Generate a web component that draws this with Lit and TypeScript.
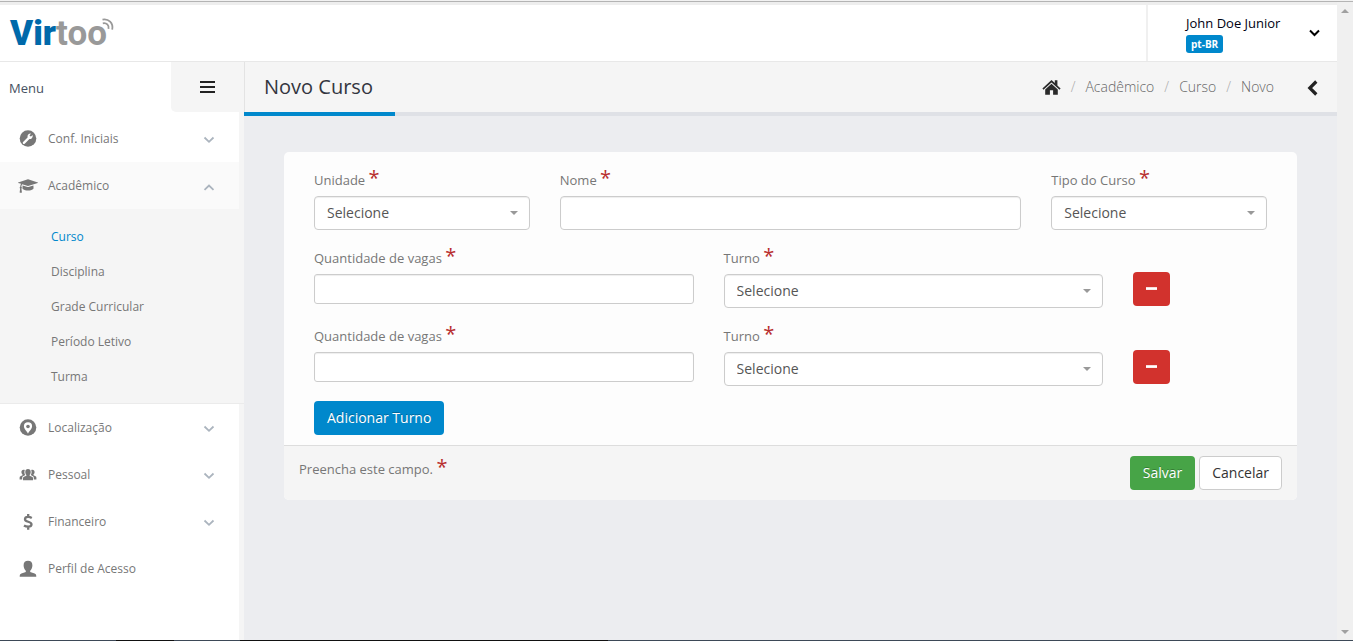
import { LitElement, html, css, svg, nothing } from "lit";
import { customElement, property, state } from "lit/decorators.js";
import { classMap } from "lit/directives/class-map.js";

const icons = {
  wrench: svg`<svg class="icon" width="18" height="18" viewBox="0 0 18 18"><circle cx="9" cy="8.500" r="8.300" fill="currentColor"/><path d="M4.900 12.900 10.600 7.100" stroke="#fff" stroke-width="2.300" stroke-linecap="round"/><path d="M13.600 5 11.700 6.700 10.500 5.700 11.900 3.400A3.200 3.200 0 0 0 8.600 7.400L10.300 9.100A3.200 3.200 0 0 0 13.600 5Z" fill="#fff"/></svg>`,
  cap: svg`<svg class="icon" width="20" height="16" viewBox="0 0 2304 1792"><path fill="currentColor" d="M1774 836l18 316q4 69-82 128t-235 93.500-323 34.500-323-34.500-235-93.500-82-128l18-316 574 181q22 7 48 7t48-7zM2304 512q0 23-22 31l-1120 352q-4 1-10 1t-10-1l-652-206q-43 34-71 111.500t-34 178.500q63 36 63 109 0 69-58 107l58 433q2 14-8 25-9 11-24 11h-192q-15 0-24-11-10-11-8-25l58-433q-58-38-58-107 0-73 65-111 11-207 98-330l-333-104q-22-8-22-31t22-31l1120-352q4-1 10-1t10 1l1120 352q22 8 22 31z"/></svg>`,
  pin: svg`<svg class="icon" width="18" height="18" viewBox="0 0 18 18"><circle cx="9" cy="8.500" r="8.300" fill="currentColor"/><path d="M9 14.800C8.200 12.400 4.900 10.300 4.900 7.300A4.100 4.100 0 0 1 13.100 7.300C13.100 10.300 9.800 12.400 9 14.800Z" fill="#fff"/><circle cx="9" cy="7.500" r="1.800" fill="currentColor"/></svg>`,
  group: svg`<svg class="icon" width="18" height="18" viewBox="0 0 18 18" fill="currentColor"><path d="M6.300 6C6.300 3.700 7.300 3 9 3S11.700 3.700 11.700 6C11.700 7.500 11.200 8.300 10.600 8.900V9.700L13 10.700C13.700 11 14 11.500 14 12.300V14.300H4V12.300C4 11.500 4.300 11 5 10.700L7.400 9.700V8.900C6.800 8.300 6.300 7.500 6.300 6Z"/><path d="M5.800 3.900C3.600 3.200 2.400 4.300 2.400 6 2.400 7.300 2.900 8 3.500 8.600V9.200L1.500 10.200C.9 10.500.6 11 .6 11.700V13.500H3.200V12C3.200 10.900 3.600 10.300 4.500 9.900L6.300 9C5.300 7.700 5.100 5.500 5.800 3.900ZM12.200 3.900C14.400 3.200 15.600 4.300 15.600 6 15.600 7.300 15.100 8 14.500 8.600V9.200L16.500 10.200C17.100 10.500 17.400 11 17.400 11.700V13.500H14.800V12C14.800 10.900 14.400 10.300 13.500 9.900L11.700 9C12.700 7.700 12.900 5.500 12.200 3.900Z"/></svg>`,
  dollar: svg`<svg class="icon" width="18" height="18" viewBox="0 0 18 18" fill="none" stroke="currentColor" stroke-width="2.300"><path d="M12.800 5C11.600 4.300 10.600 3.900 9.200 3.900 7.300 3.900 6 4.800 6 6.200 6 9.500 12.500 8 12.500 11.300 12.500 12.900 11.100 13.700 9.200 13.700 7.500 13.700 6.200 13.300 5 12.500M9.200 1V3.900M9.200 13.700V16.700"/></svg>`,
  user: svg`<svg class="icon" width="18" height="18" viewBox="0 0 18 18" fill="currentColor"><path d="M4.600 5.200C4.600 2.200 6.300.8 9 .8S13.400 2.200 13.400 5.200C13.400 7.800 12.400 9.500 11.200 10.700V12L15.600 13.400C16.900 13.900 17.300 14.600 17.300 16.800H.7C.7 14.600 1.100 13.900 2.400 13.400L6.800 12V10.700C5.600 9.500 4.600 7.800 4.600 5.200Z"/></svg>`,
};

const chevronDown = svg`<svg width="12" height="8" viewBox="0 0 12 8" fill="none" stroke="currentColor" stroke-width="1.800"><path d="M1.500 1.500 6 5.800 10.500 1.500"/></svg>`;
const chevronUp = svg`<svg width="12" height="8" viewBox="0 0 12 8" fill="none" stroke="currentColor" stroke-width="1.800"><path d="M1.500 6.800 6 2.500 10.500 6.800"/></svg>`;

interface MenuEntry {
  label: string;
  icon: keyof typeof icons;
  leaf?: boolean;
  children?: string[];
}

const MENU: MenuEntry[] = [
  { label: "Conf. Iniciais", icon: "wrench" },
  {
    label: "Acadêmico",
    icon: "cap",
    children: ["Curso", "Disciplina", "Grade Curricular", "Período Letivo", "Turma"],
  },
  { label: "Localização", icon: "pin" },
  { label: "Pessoal", icon: "group" },
  { label: "Financeiro", icon: "dollar" },
  { label: "Perfil de Acesso", icon: "user", leaf: true },
];

@customElement("side-menu")
class SideMenu extends LitElement {
  @state() open = "Acadêmico";

  static styles = css`
    :host {
      display: block;
      background: #fff;
      border-right: 5px solid #f5f5f5;
      padding-top: 3px;
      font-size: 12px;
      line-height: 17px;
    }
    ul {
      list-style: none;
      margin: 0;
      padding: 0;
    }
    .item {
      box-sizing: border-box;
      display: flex;
      align-items: center;
      width: 100%;
      height: 47px;
      padding: 0 24px 0 18px;
      border: 0;
      background: none;
      color: #777;
      font: inherit;
      text-align: left;
      text-decoration: none;
      cursor: pointer;
    }
    .open {
      background: #fafafa;
    }
    .glyph {
      display: flex;
      justify-content: center;
      width: 20px;
      margin-right: 10px;
    }
    .label {
      flex: 1;
    }
    .arrow {
      display: flex;
      padding-top: 3px;
      color: #abb4be;
    }
    .sub {
      margin-right: -5px;
      padding: 10px 0 9px;
      background: #f5f5f5;
      border-bottom: 1px solid #ebebeb;
    }
    .sub a {
      display: block;
      padding: 9px 20px 9px 51px;
      color: #777;
      text-decoration: none;
    }
    .sub .current {
      color: #0088cc;
    }
  `;

  toggle(label: string) {
    this.open = this.open === label ? "" : label;
  }

  renderEntry(e: MenuEntry) {
    const open = this.open === e.label;
    if (e.leaf) {
      return html`<li><a class="item" href="#"><span class="glyph">${icons[e.icon]}</span><span class="label">${e.label}</span></a></li>`;
    }
    return html`<li>
      <button class=${classMap({ item: true, open })} type="button" aria-expanded=${open} @click=${() => this.toggle(e.label)}>
        <span class="glyph">${icons[e.icon]}</span><span class="label">${e.label}</span>
        <span class="arrow">${open ? chevronUp : chevronDown}</span>
      </button>
      ${open && e.children
        ? html`<ul class="sub">${e.children.map((c, i) => html`<li><a class=${classMap({ current: i === 0 })} href="#">${c}</a></li>`)}</ul>`
        : nothing}
    </li>`;
  }

  render() {
    return html`<nav aria-label="Menu"><ul>${MENU.map((e) => this.renderEntry(e))}</ul></nav>`;
  }
}

@customElement("form-field")
class FormField extends LitElement {
  @property() label = "";
  @property() kind = "text";
  @property({ type: Boolean }) compact = false;

  static styles = css`
    :host {
      display: block;
      min-width: 0;
    }
    label {
      display: block;
      height: 34px;
      font-size: 13px;
      line-height: 36px;
      color: #777;
      white-space: nowrap;
    }
    .req {
      font-size: 20px;
      line-height: 1px;
      color: #b82e2e;
    }
    input,
    select {
      box-sizing: border-box;
      display: block;
      width: 100%;
      height: 34px;
      margin: 0;
      padding: 0 12px;
      border: 1px solid #ccc;
      border-radius: 4px;
      background: #fff;
      box-shadow: inset 0 1px 1px rgba(0, 0, 0, 0.07);
      color: #555;
      font: 14px/20px "Open Sans", sans-serif;
      appearance: none;
      grid-area: 1 / 1;
    }
    input.compact {
      height: 30px;
      border-radius: 3px;
    }
    .picker {
      display: grid;
      align-items: center;
    }
    .caret {
      grid-area: 1 / 1;
      justify-self: end;
      margin-right: 12px;
      pointer-events: none;
    }
  `;

  render() {
    const control =
      this.kind === "select"
        ? html`<div class="picker">
            <select id="control"><option>Selecione</option></select>
            <svg class="caret" width="8" height="4" viewBox="0 0 8 4"><path d="M0 0H8L4 4Z" fill="#999" /></svg>
          </div>`
        : html`<input id="control" type="text" class=${classMap({ compact: this.compact })} />`;
    return html`<label for="control">${this.label} <span class="req">*</span></label>${control}`;
  }
}

@customElement("app-root")
class AppRoot extends LitElement {
  @state() shifts = [1, 2];

  static styles = css`
    :host {
      box-sizing: border-box;
      display: flex;
      flex-direction: column;
      min-height: 100vh;
      background: #ecedf0;
      color: #777;
      font: 13px/20px "Open Sans", sans-serif;
    }
    .chrome {
      height: 1px;
      background: #f2f2f2;
      border-bottom: 1px solid #b4b4b4;
    }
    .frame {
      flex: 1;
      display: flex;
    }
    .app {
      flex: 1;
      min-width: 0;
      display: flex;
      flex-direction: column;
      border-top: 3px solid #eee;
    }
    .scroll {
      display: flex;
      flex-direction: column;
      justify-content: space-between;
      align-items: center;
      width: 16px;
      padding: 7px 0 6px;
      box-sizing: border-box;
      background: #f0f0f0;
    }
    .taskbar {
      height: 1px;
      background: linear-gradient(90deg, #3d4957 116px, #111 116px 174px, #3d4957 174px 240px, #111 240px 608px, #3d4957 608px);
    }
    .top {
      display: flex;
      justify-content: space-between;
      height: 56px;
      background: #fff;
      border-bottom: 1px solid #e8e8e8;
    }
    .logo {
      position: relative;
      padding-left: 10px;
      color: #999;
      font: 700 35px/58px Roboto, sans-serif;
      text-decoration: none;
    }
    .logo b {
      color: #0069aa;
    }
    .waves {
      position: absolute;
      left: 100px;
      top: 12px;
    }
    .account {
      box-sizing: border-box;
      display: flex;
      align-items: center;
      justify-content: space-between;
      width: 191px;
      padding: 0 17px 0 38px;
      border: 0;
      border-left: 2px solid #f0f0f0;
      background: none;
      color: #000011;
      font: inherit;
      text-align: left;
    }
    .who {
      display: flex;
      flex-direction: column;
      align-items: flex-start;
      gap: 2px;
    }
    .lang {
      padding: 0 5px;
      border-radius: 3px;
      background: #0088cc;
      color: #fff;
      font-size: 10px;
      font-weight: 700;
      line-height: 18px;
    }
    .body {
      flex: 1;
      display: grid;
      grid-template-columns: 244px minmax(0, 1fr);
      grid-template-rows: 50px 1fr;
    }
    .menuhead {
      display: flex;
      justify-content: space-between;
      background: #fff;
    }
    .menuhead span {
      padding-left: 9px;
      line-height: 52px;
      color: #465162;
    }
    .burger {
      display: flex;
      align-items: center;
      justify-content: center;
      width: 73px;
      padding: 0;
      border: 0;
      border-bottom-left-radius: 5px;
      background: #f5f5f5;
    }
    .pagehead {
      display: flex;
      justify-content: space-between;
      align-items: center;
      padding: 0 19px;
      border-left: 1px solid #e3e3e3;
      background: #f5f5f5;
    }
    h1 {
      margin: 0;
      font-size: 20px;
      font-weight: 400;
      line-height: 28px;
      color: #33353f;
    }
    .crumbs {
      display: flex;
      align-items: center;
      font-size: 14px;
      font-weight: 300;
    }
    .crumbs a {
      display: flex;
      color: #666;
      text-decoration: none;
    }
    .crumbs a + a::before {
      content: "/";
      padding: 0 10px;
      color: #aaa;
    }
    .back {
      display: flex;
      margin-left: 33px;
      padding: 2px 0 0;
      border: 0;
      background: none;
    }
    .content {
      border-top: 4px solid #dfe1e6;
      padding: 0 40px;
    }
    .progress {
      width: 151px;
      height: 4px;
      margin: -4px 0 36px -40px;
      background: #0088cc;
    }
    form {
      border-radius: 5px;
      background: #fdfdfd;
      overflow: hidden;
    }
    .fields {
      padding: 10px 30px;
      display: flex;
      flex-direction: column;
      gap: 10px;
    }
    .row {
      display: grid;
      grid-template-columns: repeat(12, minmax(0, 1fr));
      column-gap: 30px;
    }
    .c3 {
      grid-column: span 3;
    }
    .c5 {
      grid-column: span 5;
    }
    .c6 {
      grid-column: span 6;
    }
    .btn {
      box-sizing: border-box;
      height: 34px;
      padding: 0 12px;
      border: 1px solid transparent;
      border-radius: 4px;
      color: #fff;
      font: 14px/20px "Open Sans", sans-serif;
      text-shadow: 0 -1px 0 rgba(0, 0, 0, 0.25);
    }
    .primary {
      align-self: flex-start;
      margin-top: 5px;
      background: #0088cc;
    }
    .success {
      background: #47a447;
    }
    .plain {
      border-color: #ccc;
      background: #fff;
      color: #333;
      text-shadow: none;
    }
    .danger {
      display: flex;
      align-items: center;
      width: 37px;
      margin-top: 32px;
      background: #d2322d;
    }
    footer {
      display: flex;
      justify-content: space-between;
      padding: 10px 15px;
      border-top: 1px solid #ddd;
      background: #f5f5f5;
    }
    footer p {
      margin: 0;
      line-height: 26px;
    }
    .req {
      font-size: 20px;
      line-height: 1px;
      color: #b82e2e;
    }
    .actions {
      display: flex;
      gap: 4px;
    }
  `;

  remove(id: number) {
    this.shifts = this.shifts.filter((s) => s !== id);
  }

  add() {
    this.shifts = [...this.shifts, Math.max(0, ...this.shifts) + 1];
  }

  renderShift(id: number) {
    return html`<div class="row">
      <form-field class="c5" label="Quantidade de vagas" compact></form-field>
      <form-field class="c5" label="Turno" kind="select"></form-field>
      <button class="btn danger" type="button" aria-label="Remover turno" @click=${() => this.remove(id)}>
        <svg width="12" height="4" viewBox="0 0 12 4"><path d="M0 0H12V3H0Z" fill="#fff" /></svg>
      </button>
    </div>`;
  }

  render() {
    return html`
      <div class="chrome"></div>
      <div class="frame">
        <div class="app">
          <header class="top">
            <a class="logo" href="#"><b>Vir</b>too<svg class="waves" width="15" height="18" viewBox="0 0 15 18" fill="none" stroke="#999" stroke-width="1.800"><path d="M2.500 2.600C8.500 1.300 13.600 6.200 12.200 12.600M2.800 6.300C6.500 5.500 9.300 8.200 8.500 11.900" /></svg></a>
            <button class="account" type="button">
              <span class="who"><span>John Doe Junior</span><span class="lang">pt-BR</span></span>
              <svg width="11" height="8" viewBox="0 0 11 8" fill="none" stroke="#000" stroke-width="2"><path d="M1 1.500 5.500 6 10 1.500" /></svg>
            </button>
          </header>
          <div class="body">
            <div class="menuhead">
              <span>Menu</span>
              <button class="burger" type="button" aria-label="Alternar menu">
                <svg width="15" height="12" viewBox="0 0 15 12" fill="#222"><path d="M0 0H15V2H0ZM0 5H15V7H0ZM0 10H15V12H0Z" /></svg>
              </button>
            </div>
            <div class="pagehead">
              <h1>Novo Curso</h1>
              <nav class="crumbs">
                <a href="#" aria-label="Início"><svg width="19" height="20" viewBox="0 0 19 20" fill="#2a2a2a"><path d="M9.500 3 12.800 6.100V3.300H15.400V8.500L18.600 11.500 17.500 12.700 9.500 5.400 1.500 12.700.4 11.500Z" /><path d="M9.500 6.700 15.800 12.500V17.800H11.100V13.300H7.900V17.800H3.200V12.500Z" /></svg></a>
                <a href="#">Acadêmico</a><a href="#">Curso</a><a href="#">Novo</a>
                <button class="back" type="button" aria-label="Voltar"><svg width="11" height="16" viewBox="0 0 11 16" fill="none" stroke="#222" stroke-width="3.200"><path d="M9.300 1.500 2.800 8 9.300 14.500" /></svg></button>
              </nav>
            </div>
            <side-menu></side-menu>
            <main class="content">
              <div class="progress"></div>
              <form @submit=${(e: Event) => e.preventDefault()}>
                <div class="fields">
                  <div class="row">
                    <form-field class="c3" label="Unidade" kind="select"></form-field>
                    <form-field class="c6" label="Nome"></form-field>
                    <form-field class="c3" label="Tipo do Curso" kind="select"></form-field>
                  </div>
                  ${this.shifts.map((s) => this.renderShift(s))}
                  <button class="btn primary" type="button" @click=${this.add}>Adicionar Turno</button>
                </div>
                <footer>
                  <p>Preencha este campo. <span class="req">*</span></p>
                  <div class="actions">
                    <button class="btn success" type="submit">Salvar</button>
                    <button class="btn plain" type="button">Cancelar</button>
                  </div>
                </footer>
              </form>
            </main>
          </div>
        </div>
        <div class="scroll" aria-hidden="true">
          <svg width="8" height="4" viewBox="0 0 8 4"><path d="M0 4H8L4 0Z" fill="#a0a0a0" /></svg>
          <svg width="8" height="4" viewBox="0 0 8 4"><path d="M0 0H8L4 4Z" fill="#a0a0a0" /></svg>
        </div>
      </div>
      <div class="taskbar"></div>
    `;
  }
}
